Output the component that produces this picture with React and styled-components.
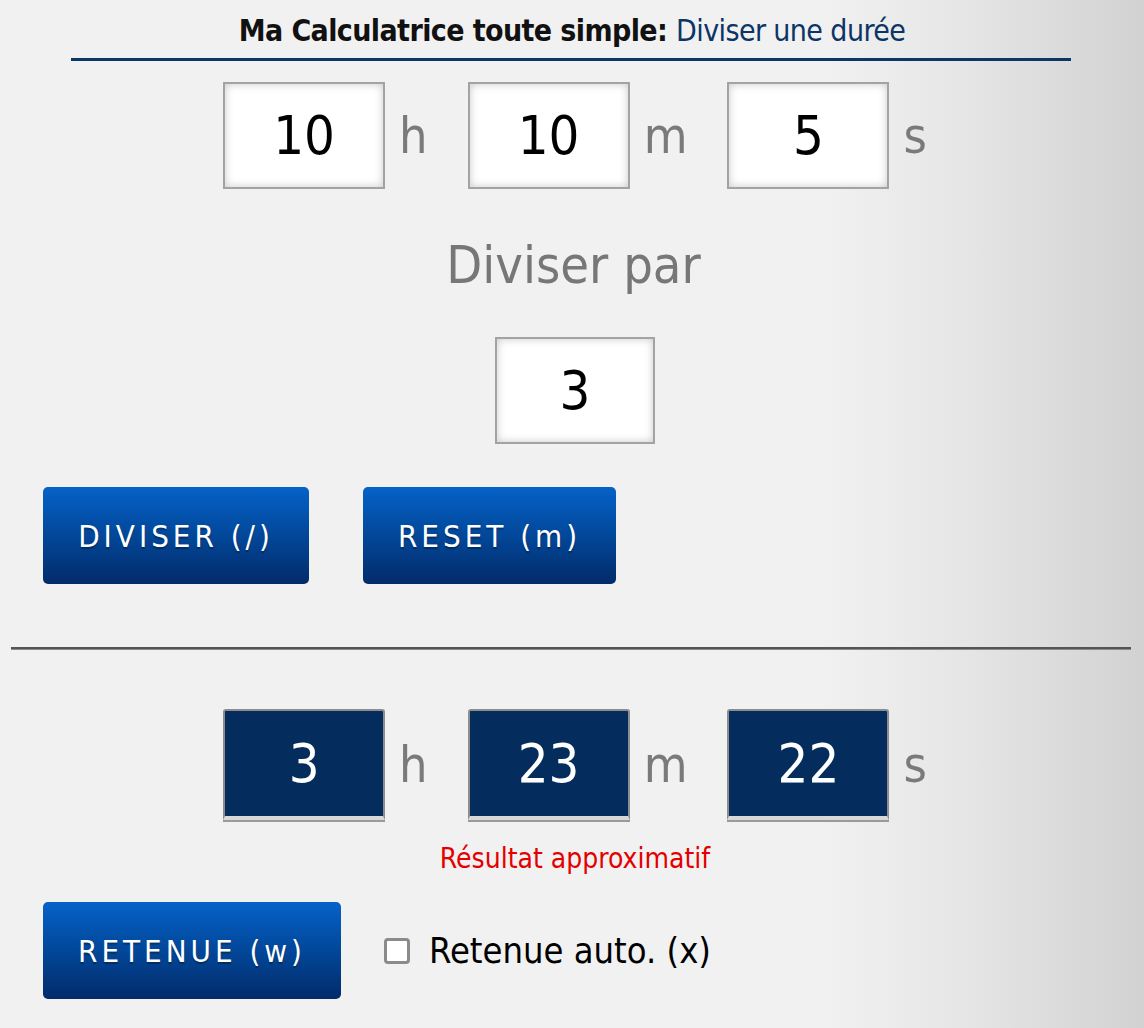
import React from "react";
import styled, { createGlobalStyle } from "styled-components";

const GlobalStyle = createGlobalStyle`
  html, body { margin: 0; padding: 0; }
  body {
    font-family: "DejaVu Sans Condensed", "DejaVu Sans", "Liberation Sans", sans-serif;
    font-stretch: condensed;
    background: #f1f1f1;
  }
`;

const Page = styled.div`
  width: 1144px;
  min-height: 1028px;
  box-sizing: border-box;
  background: linear-gradient(to right, #f1f1f1 0%, #f1f1f1 72%, #e6e6e6 84%, #d2d2d2 100%);
  padding-top: 11px;
  overflow: hidden;
`;

const Title = styled.h1`
  margin: 0;
  text-align: center;
  font-size: 30px;
  line-height: 40px;
  font-weight: 700;
  color: #111;
  letter-spacing: -0.6px;
`;

const TitleAccent = styled.span`
  font-weight: 400;
  color: #0c3566;
`;

const TitleRule = styled.div`
  margin: 7px 73px 0 71px;
  height: 3px;
  background: #0b3766;
`;

const TimeRow = styled.div`
  display: flex;
  align-items: center;
  justify-content: center;
  margin-top: ${(p) => p.$top}px;
  padding-left: 46px;
`;

const Field = styled.div`
  box-sizing: border-box;
  width: ${(p) => p.$w || 162}px;
  height: ${(p) => (p.$dark ? 111 : 107)}px;
  display: flex;
  align-items: center;
  justify-content: center;
  font-size: 54px;
  color: ${(p) => (p.$dark ? "#fff" : "#000")};
  background: ${(p) => (p.$dark ? "#042d5d" : "#fff")};
  border: 2px solid ${(p) => (p.$dark ? "#8d8d8d" : "#a3a3a3")};
  border-bottom: ${(p) => (p.$dark ? "4px solid #d8d8d8" : "2px solid #a3a3a3")};
  border-radius: ${(p) => (p.$dark ? "3px 3px 0 0" : "0")};
  box-shadow: ${(p) =>
    p.$dark ? "0 2px 0 #9a9a9a" : "inset 0 0 8px rgba(0,0,0,0.22)"};
`;

const Unit = styled.span`
  font-size: 50px;
  color: #7a7a7a;
  margin: 0 40px 0 14px;
  line-height: 1;
`;

const Label = styled.div`
  margin-top: 44px;
  text-align: center;
  font-size: 52px;
  line-height: 64px;
  color: #777;
  padding-left: 3px;
`;

const Center = styled.div`
  display: flex;
  justify-content: center;
  margin-top: 40px;
  padding-left: 6px;
`;

const ButtonRow = styled.div`
  display: flex;
  align-items: center;
  gap: ${(p) => p.$gap}px;
  padding-left: 43px;
  margin-top: ${(p) => p.$top}px;
`;

const Button = styled.button`
  box-sizing: border-box;
  width: ${(p) => p.$w}px;
  height: 97px;
  border: none;
  border-radius: 5px;
  background: linear-gradient(to bottom, #0562c9 0%, #024a9e 45%, #022b6a 100%);
  color: #fff;
  font-family: inherit;
  font-stretch: condensed;
  font-size: 31px;
  letter-spacing: 4px;
  text-shadow: 0 2px 1px rgba(0, 0, 0, 0.3);
  cursor: pointer;
  padding: 0;
`;

const Separator = styled.div`
  margin: 63px 13px 0 11px;
  height: 2px;
  background: #555;
  border-bottom: 1px solid #8a8a8a;
`;

const Note = styled.div`
  margin-top: 22px;
  text-align: center;
  font-size: 28px;
  color: #e30000;
  padding-left: 6px;
`;

const CheckLabel = styled.label`
  display: flex;
  align-items: center;
  gap: 19px;
  font-size: 36px;
  color: #000;
`;

const Box = styled.span`
  box-sizing: border-box;
  width: 26px;
  height: 26px;
  border: 3px solid #8b8b8b;
  border-radius: 4px;
  background: #fff;
  display: inline-block;
`;

function TimeFields({ values, dark, top }) {
  const units = ["h", "m", "s"];
  return (
    <TimeRow $top={top}>
      {values.map((v, i) => (
        <React.Fragment key={units[i]}>
          <Field $dark={dark}>{v}</Field>
          <Unit>{units[i]}</Unit>
        </React.Fragment>
      ))}
    </TimeRow>
  );
}

export default function App() {
  return (
    <>
      <GlobalStyle />
      <Page>
        <Title>
          Ma Calculatrice toute simple: <TitleAccent>Diviser une durée</TitleAccent>
        </Title>
        <TitleRule />
        <TimeFields values={["10", "10", "5"]} top={21} />
        <Label>Diviser par</Label>
        <Center>
          <Field $w={160}>3</Field>
        </Center>
        <ButtonRow $gap={54} $top={43}>
          <Button $w={266}>DIVISER (/)</Button>
          <Button $w={253}>RESET (m)</Button>
        </ButtonRow>
        <Separator />
        <TimeFields values={["3", "23", "22"]} dark top={59} />
        <Note>Résultat approximatif</Note>
        <ButtonRow $gap={43} $top={27}>
          <Button $w={298}>RETENUE (w)</Button>
          <CheckLabel>
            <Box />
            Retenue auto. (x)
          </CheckLabel>
        </ButtonRow>
      </Page>
    </>
  );
}
